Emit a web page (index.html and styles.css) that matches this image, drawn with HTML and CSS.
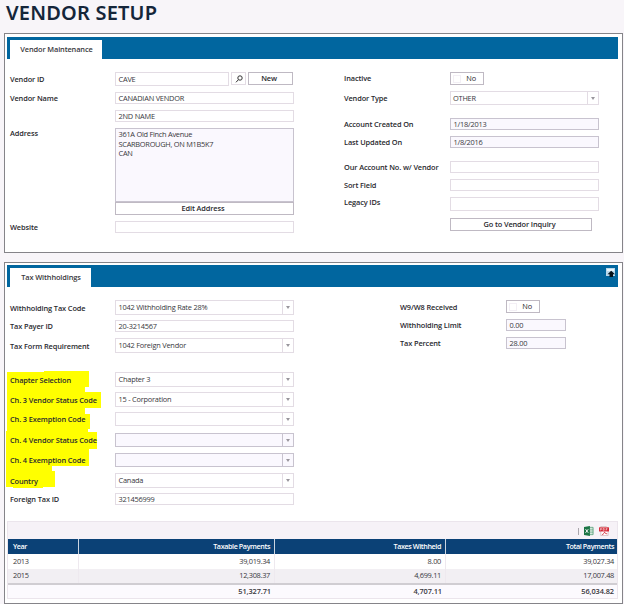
FILE: index.html
```html
<!DOCTYPE html>
<html lang="en">
<head>
<meta charset="utf-8">
<title>Vendor Setup</title>
<link rel="stylesheet" href="styles.css">
</head>
<body>
<h1>VENDOR SETUP</h1>

<section class="panel maintenance">
  <header class="bar"><span class="tab tab-wide">Vendor Maintenance</span></header>
  <div class="columns">
    <div class="col left">
      <div class="row tall"><label>Vendor ID</label>
        <div class="lookup">
          <span class="field">CAVE</span>
          <button class="search" aria-label="Search"><svg viewBox="0 0 10 10"><circle cx="6" cy="4" r="2.2"/><path d="M4.4 5.7 2 8.3"/></svg></button>
          <button class="new">New</button>
        </div>
      </div>
      <div class="row"><label>Vendor Name</label><span class="field">CANADIAN VENDOR</span></div>
      <div class="row"><label></label><span class="field">2ND NAME</span></div>
      <div class="row address"><label>Address</label><span class="field off">361A Old Finch Avenue<br>SCARBOROUGH, ON M1B5K7<br>CAN</span></div>
      <div class="row edit"><label></label><button>Edit Address</button></div>
      <div class="row"><label>Website</label><span class="field"></span></div>
    </div>
    <div class="col right">
      <div class="row short"><label>Inactive</label><button class="toggle"><i></i>No</button></div>
      <div class="row tall gap-12"><label>Vendor Type</label><span class="field select flush">OTHER</span></div>
      <div class="row"><label>Account Created On</label><span class="field off">1/18/2013</span></div>
      <div class="row gap-13"><label>Last Updated On</label><span class="field off">1/8/2016</span></div>
      <div class="row"><label>Our Account No. w/ Vendor</label><span class="field"></span></div>
      <div class="row"><label>Sort Field</label><span class="field"></span></div>
      <div class="row tall raised"><label>Legacy IDs</label><span class="field"></span></div>
      <div class="row inquiry"><label></label><button>Go to Vendor Inquiry</button></div>
    </div>
  </div>
</section>

<section class="panel tax">
  <header class="bar"><span class="tab">Tax Withholdings</span>
    <svg class="collapse" viewBox="0 0 10 10"><path fill="#b9d8ec" d="M0 0h9v8H0z"/><path fill="#e9f5fc" d="M1 1h7v2H1z"/><path fill="#07131c" d="M5.200 2.800 9 6.200H7V9H3.500V6.200H1.500z"/></svg>
  </header>
  <div class="columns">
    <div class="col left">
      <svg class="marker" viewBox="0 0 100 120"><path d="M1 1H38V0H83V16H79V21H95V37H79V43H84V58H82V61H91V78H83V95H46V100H49V116H37V117H7V116H0V60H1z"/></svg>
      <div class="row tall"><label>Withholding Tax Code</label><span class="field select">1042 Withholding Rate 28%</span></div>
      <div class="row"><label>Tax Payer ID</label><span class="field">20-3214567</span></div>
      <div class="row tall gap-20"><label>Tax Form Requirement</label><span class="field select">1042 Foreign Vendor</span></div>
      <div class="row tall"><label>Chapter Selection</label><span class="field select">Chapter 3</span></div>
      <div class="row tall"><label>Ch. 3 Vendor Status Code</label><span class="field select">15 - Corporation</span></div>
      <div class="row tall gap-7"><label>Ch. 3 Exemption Code</label><span class="field select"></span></div>
      <div class="row tall"><label>Ch. 4 Vendor Status Code</label><span class="field select off"></span></div>
      <div class="row tall"><label>Ch. 4 Exemption Code</label><span class="field select off"></span></div>
      <div class="row tall"><label>Country</label><span class="field select">Canada</span></div>
      <div class="row"><label>Foreign Tax ID</label><span class="field">321456999</span></div>
    </div>
    <div class="col right">
      <div class="row short"><label>W9/W8 Received</label><button class="toggle"><i></i>No</button></div>
      <div class="row"><label>Withholding Limit</label><span class="field off">0.00</span></div>
      <div class="row"><label>Tax Percent</label><span class="field off">28.00</span></div>
    </div>
  </div>
  <div class="grid">
    <div class="tools"><i></i>
      <svg viewBox="0 0 11 11"><path fill="#fff" stroke="#3f9368" stroke-width=".8" d="M5 1.500h5v8H5z"/><path stroke="#3f9368" stroke-width=".8" d="M6 3.500h4M6 5.500h4M6 7.500h4"/><path fill="#1c7546" d="M0 1 6.500 0v11L0 10z"/><path stroke="#fff" d="m1.700 3.500 3 4m0-4-3 4"/></svg>
      <svg viewBox="0 0 11 11"><path fill="#fff" stroke="#c9a9ad" stroke-width=".7" d="M2 .5h6l2 2v8H2z"/><path fill="#d32735" d="M0 1.500h11v4.500H0z"/><path fill="none" stroke="#f3c3c7" stroke-width=".8" d="M1.500 5V2.700h1.300v1.100H1.500M4.500 2.700v2h1.200v-2zM7.800 5V2.700h1.500M7.800 3.900h1.200"/><path fill="none" stroke="#d32735" d="M3.500 9.500c2-1 2.500-2 2.500-3 .5 1.500 1.500 2 3 2"/></svg>
    </div>
    <table>
      <colgroup><col class="c1"><col class="c2"><col class="c3"><col class="c4"></colgroup>
      <thead><tr><th>Year</th><th>Taxable Payments</th><th>Taxes Withheld</th><th>Total Payments</th></tr></thead>
      <tbody>
        <tr><td>2013</td><td>39,019.34</td><td>8.00</td><td>39,027.34</td></tr>
        <tr class="alt"><td>2015</td><td>12,308.37</td><td>4,699.11</td><td>17,007.48</td></tr>
      </tbody>
      <tfoot><tr><td></td><td>51,327.71</td><td>4,707.11</td><td>56,034.82</td></tr></tfoot>
    </table>
  </div>
</section>
</body>
</html>
```
FILE: styles.css
```css
* { box-sizing: border-box; }
body {
  margin: 0;
  width: 624px;
  height: 604px;
  overflow: hidden;
  background: #f8f5f9;
  color: #38373c;
  font: 7.400px/10px "Open Sans", "Noto Sans", sans-serif;
  letter-spacing: -0.12px;
}
h1 {
  margin: 0;
  padding: 0 0 0 6px;
  height: 33px;
  font: 600 20px/25px "Noto Sans", sans-serif;
  letter-spacing: 0.2px;
  color: #15263a;
}
.panel {
  width: 619px;
  margin-left: 4px;
  padding: 2px 4px 0 2px;
  border: 1px solid #858489;
  background: #fff;
}
.maintenance { height: 220px; margin-bottom: 9px; padding-top: 3px; }
.tax { height: 342px; }
.bar {
  display: flex;
  justify-content: space-between;
  align-items: flex-end;
  height: 22px;
  padding-left: 3px;
  background: #01669f;
}
.tab {
  width: 81px;
  height: 19px;
  padding-left: 1px;
  background: #fff;
  font-weight: 600;
  line-height: 18px;
  text-align: center;
}
.tab-wide { width: 92px; }
.collapse { width: 10px; height: 10px; align-self: flex-start; margin: 3px 2px 0 0; }

.columns { display: flex; padding: 13px 0 0 3px; }
.col { position: relative; display: flex; flex-direction: column; gap: 6px; }
.row { display: grid; height: 12px; flex: none; }
.tall { height: 14px; }
.short { height: 13px; }
.left { width: 334px; }
.left .row { grid-template-columns: 105px 179px; }
.right .row { grid-template-columns: 106px 149px; }
.tax .left { width: 390px; }
.tax .right .row { grid-template-columns: 106px 60px; }
.gap-7 { margin-bottom: 1px; }
.gap-12 { margin-bottom: 7px; }
.gap-13 { margin-bottom: 7px; }
.gap-20 { margin-bottom: 14px; }
label { align-self: center; margin-top: -1px; font-weight: 600; white-space: nowrap; color: #29292e; }
.tax label { margin-top: 0; }
.raised label { margin-top: -4px; }

.field {
  display: block;
  min-width: 0;
  height: 100%;
  padding-left: 2.500px;
  border: 1px solid #e3dce4;
  background: #fff;
  line-height: 10px;
  letter-spacing: -0.22px;
  white-space: nowrap;
}
.tall .field { line-height: 12px; }
.tax .tall .field { line-height: 13px; }
.flush { padding-left: 2px; }
.off { border-color: #c8c3cf; background: #faf8fe; }
.select {
  background-image: linear-gradient(#e3dce4, #e3dce4);
  background-size: 1px 100%;
  background-position: right 10px top;
  background-repeat: no-repeat;
  position: relative;
}
.select.off { background-image: linear-gradient(#c8c3cf, #c8c3cf); }
.select::after {
  content: "";
  position: absolute;
  right: 3px;
  top: 5px;
  border: 2px solid transparent;
  border-top: 3px solid #99969d;
  border-bottom: 0;
}
.address { height: 74px; margin-bottom: -6px; }
.address label { align-self: start; margin-top: 0; }
.address .field { padding-top: 1px; line-height: 9.500px; letter-spacing: -0.27px; }
.edit { height: 13px; }

button {
  display: block;
  height: 100%;
  padding: 0 3px 0 0;
  border: 1px solid #bfb9c3;
  background: #fff;
  color: #29292e;
  font: 600 7.400px/11px "Open Sans", "Noto Sans", sans-serif;
  letter-spacing: -0.12px;
}
.lookup { display: grid; grid-template-columns: 114px 15px 45px; gap: 2px; height: 14px; }
.lookup button { height: 13px; }
.search { padding: 0; border-color: #e3dce4; }
.search svg { display: block; width: 10px; height: 10px; margin: 0 auto; fill: none; stroke: #333; stroke-width: 1; }
.toggle { display: flex; align-items: center; justify-content: flex-end; width: 34px; padding-right: 7px; font-weight: 400; }
.toggle i { width: 8px; height: 8px; margin-right: 5px; border: 1px solid #f3eff5; }
.inquiry { height: 13px; margin-top: 1px; }
.inquiry button { width: 142px; }
.marker { position: absolute; left: -4px; top: 71px; width: 100px; height: 120px; fill: #ffff00; }
.marker ~ .row { position: relative; }

.grid { margin: 16px 0 0 0; border: 1px solid #ebe5ec; background: #f6f2f7; }
.tools { display: flex; justify-content: flex-end; align-items: center; gap: 5px; height: 17px; padding: 1px 8px 0 0; }
.tools i { width: 1px; height: 7px; background: #aaa6ac; }
.tools svg { width: 10px; height: 10px; }
table { width: 100%; table-layout: fixed; border-collapse: separate; border-spacing: 0; background: #fff; letter-spacing: -0.3px; }
.c1 { width: 71px; }
.c2 { width: 196px; }
.c3 { width: 171px; }
th, td { height: 14.500px; padding: 0 4px 0 5px; border-right: 1px solid #eee9ef; line-height: 13px; text-align: right; }
th:last-child, td:last-child { padding-right: 3px; }
th { height: 15px; border-color: #cbd5e1; background: #0b4176; color: #fff; font-size: 7.200px; font-weight: 600; letter-spacing: -0.4px; }
th:first-child, td:first-child { text-align: left; }
th:last-child, td:last-child { border-right: 0; }
.alt td { background: #f2eff3; }
tfoot td { height: 15px; border-top: 2px solid #d0cdd2; border-right: 0; background: #fcfafe; font-weight: 600; letter-spacing: -0.1px; }
```
